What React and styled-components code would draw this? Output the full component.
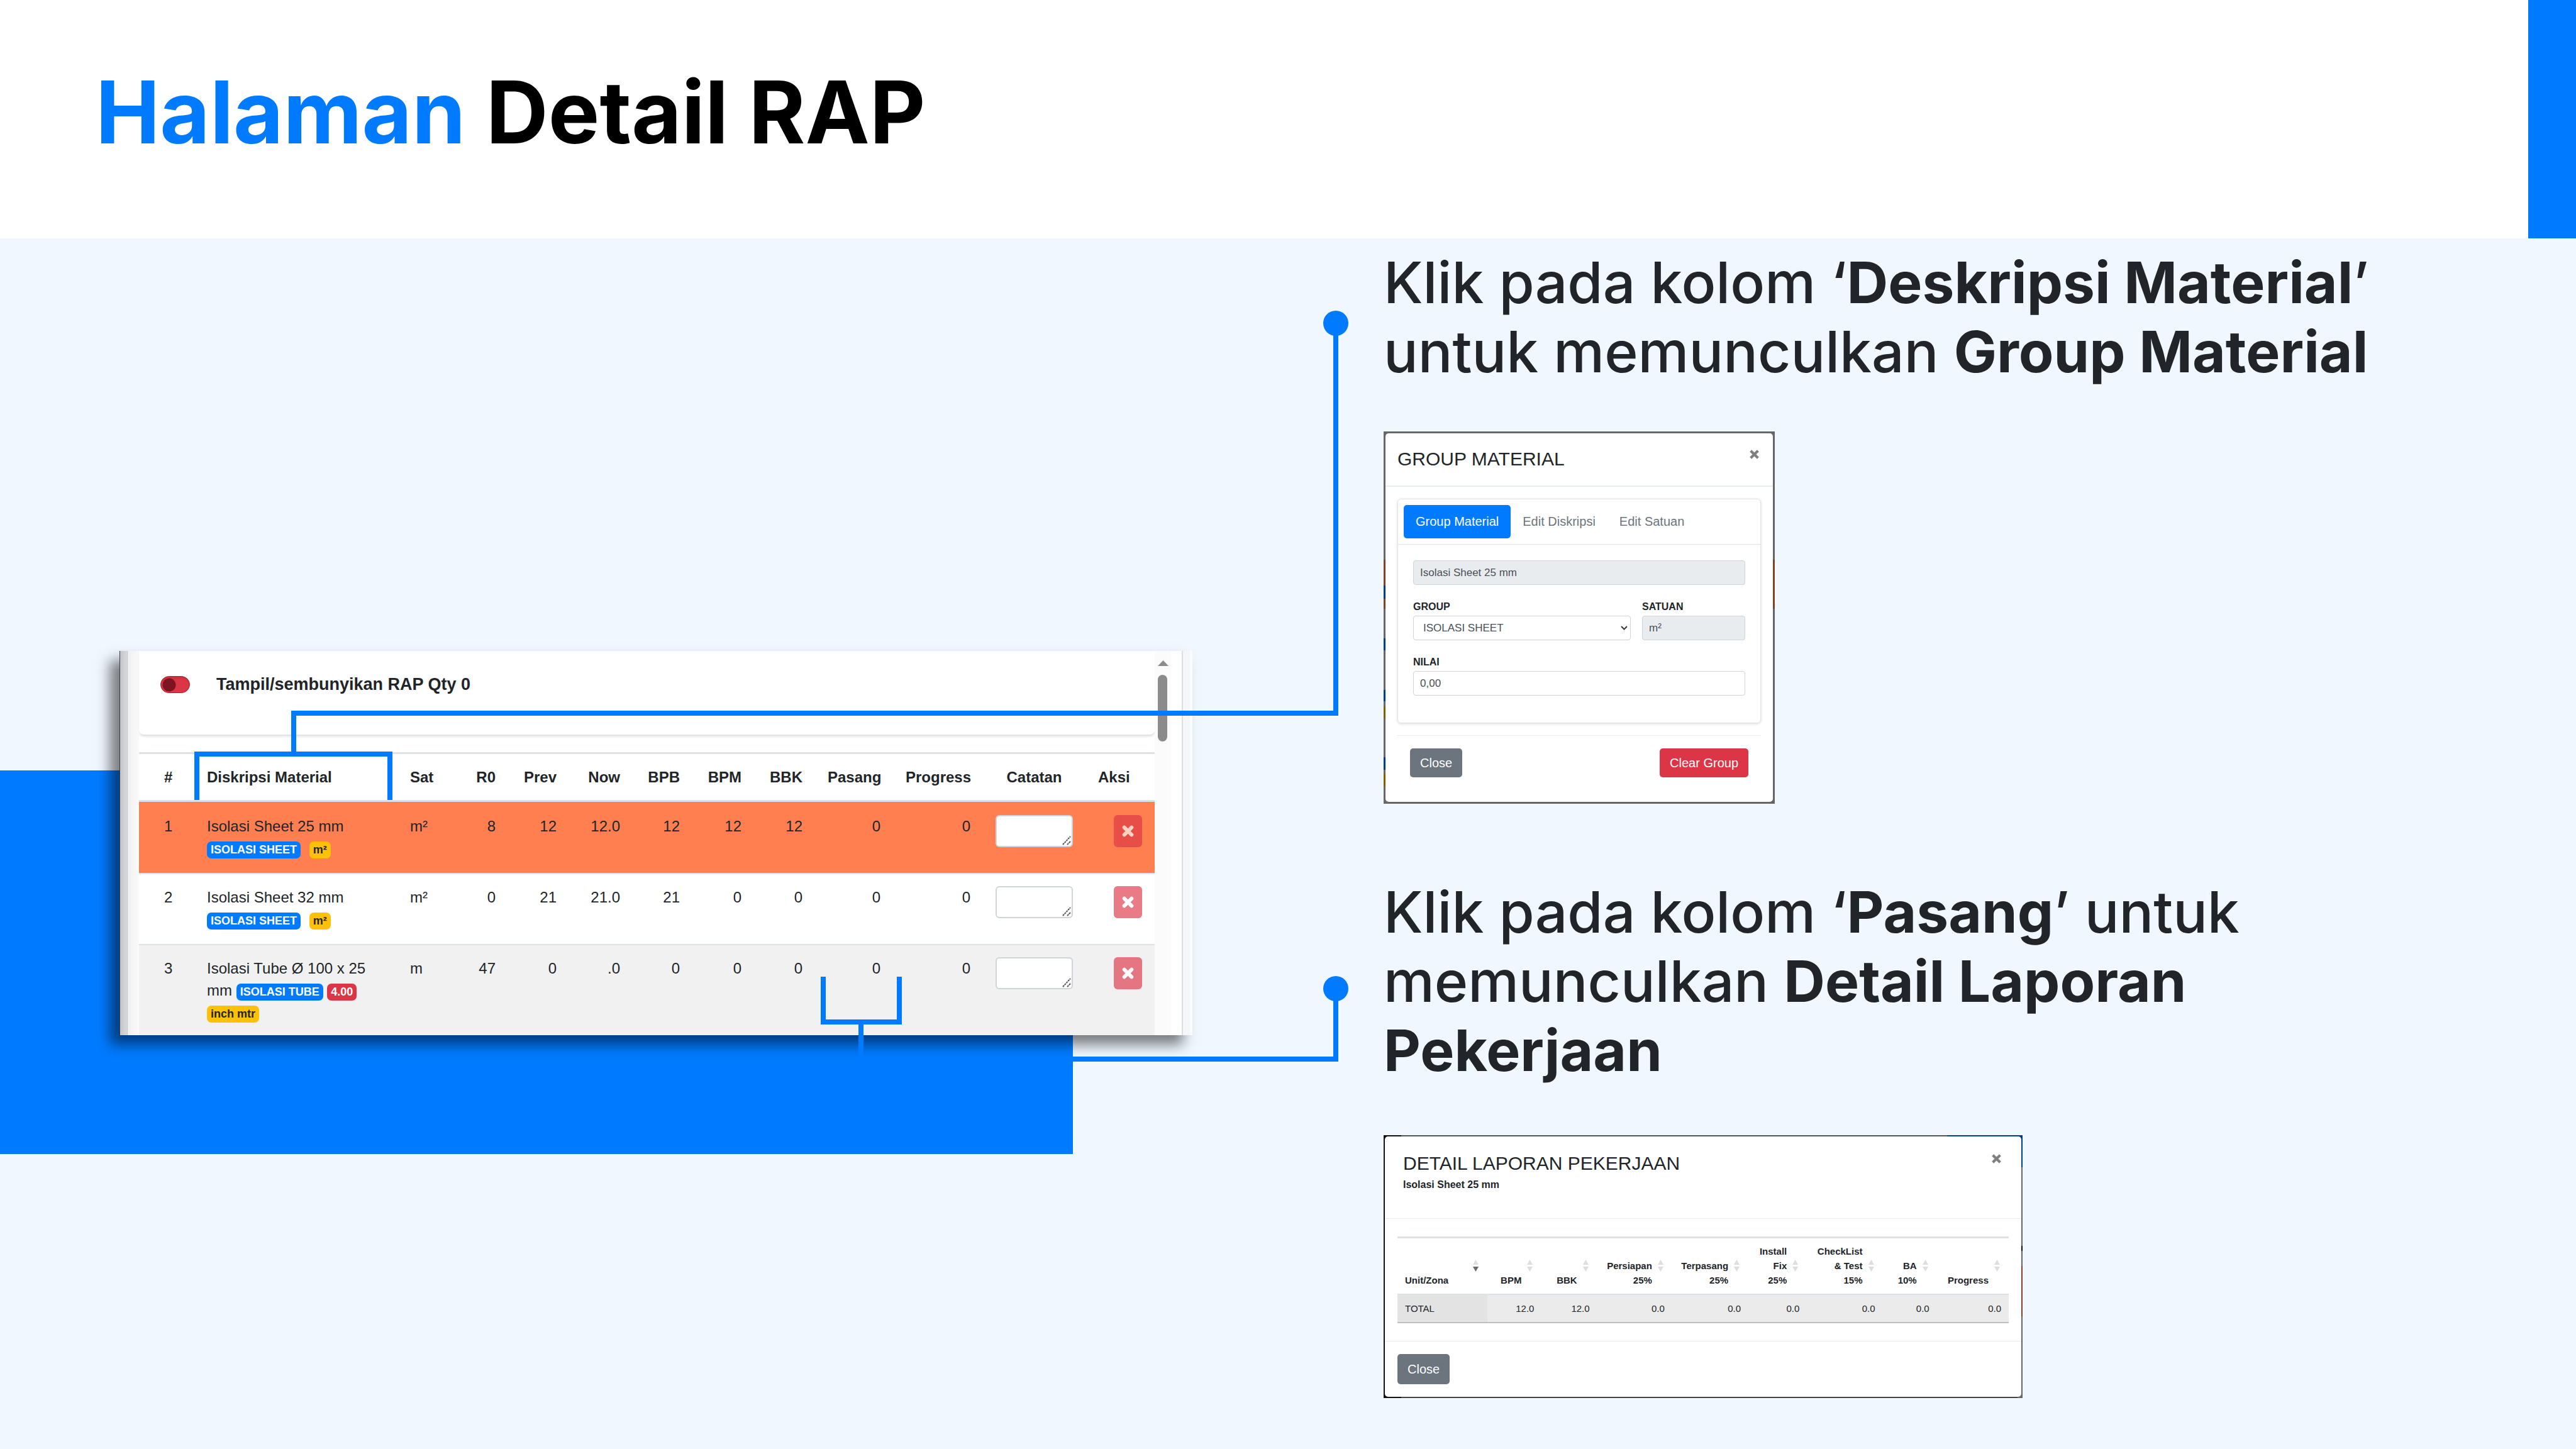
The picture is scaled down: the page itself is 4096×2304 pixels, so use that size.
import React from "react";
import styled, { createGlobalStyle, css } from "styled-components";

const blue = "#007bff";
const ink = "#212529";
const red = "#dc3545";
const amber = "#ffc107";
const line = "#dee2e6";
const sans = '"Liberation Sans", Arial, sans-serif';

const GlobalStyle = createGlobalStyle`
  *, *::before, *::after { box-sizing: border-box; }
  body { margin: 0; background: #f0f7ff; }
  button, input, select, textarea { font: inherit; color: inherit; margin: 0; }
  h1, h2, h3, p { margin: 0; }
`;

const Slide = styled.main`
  min-height: 100vh;
  display: flex;
  flex-direction: column;
  font-family: Inter, sans-serif;
  color: ${ink};
  background: #f0f7ff;
`;

const Header = styled.header`
  display: flex;
  justify-content: space-between;
  height: 379px;
  background: #fff;
`;

const Title = styled.h1`
  padding: 95px 0 0 152px;
  font-size: 137px;
  line-height: 166px;
  font-weight: 700;
  color: #000;
  white-space: nowrap;
`;

const Accent = styled.span`
  color: ${blue};
`;

const HeaderBar = styled.div`
  width: 76px;
  background: ${blue};
`;

const Body = styled.div`
  flex: 1;
  display: grid;
  grid-template-columns: 2200fr 1896fr;
`;

/* Left half: annotated table capture */

const Visual = styled.section`
  position: relative;
  min-width: 0;
  padding: 656px 304px 0 190px;
`;

const Backdrop = styled.div`
  position: absolute;
  left: 0;
  right: 494px;
  top: 846px;
  height: 610px;
  background: ${blue};
`;

const Connectors = styled.svg`
  position: absolute;
  left: 0;
  top: 0;
  overflow: visible;
  fill: ${blue};
`;

const Capture = styled.div`
  position: relative;
  display: grid;
  grid-template-columns: 13px 18px 1fr 43px 17px;
  font-family: ${sans};
  background: #fff;
  box-shadow: -15px 15px 20px rgba(0, 0, 0, 0.5);
`;

const Edge = styled.div`
  border-left: 1px solid #3a3d42;
  border-right: 1px solid #c4c5cc;
  background: linear-gradient(90deg, #c3c5c9, #d8d9de);
`;

const Fade = styled.div`
  background: linear-gradient(90deg, #efefef, #fafafa);
`;

const Outer = styled.div`
  border-left: 2px solid #dcdee3;
  border-right: 4px solid #fafbfd;
  background: #f4f6fa;
`;

const Pane = styled.div`
  min-width: 0;
`;

const FilterCard = styled.label`
  display: flex;
  align-items: center;
  gap: 42px;
  padding: 34px 34px 61px;
  margin-bottom: 26px;
  border-bottom: 2px solid #e3e3e3;
  border-radius: 0 0 8px 8px;
  box-shadow: 0 2px 3px rgba(0, 0, 0, 0.08);
  font-size: 27px;
  line-height: 38px;
  font-weight: 700;
`;

const Toggle = styled.input`
  appearance: none;
  width: 47px;
  height: 27px;
  border: 1px solid #a51f2d;
  border-radius: 14px;
  background: radial-gradient(circle at 13px 13px, #7d1420 10px, transparent 11px), ${red};
  box-shadow: inset 0 3px 3px rgba(0, 0, 0, 0.08);
`;

const RapTable = styled.table`
  width: 100%;
  table-layout: fixed;
  border-collapse: separate;
  border-spacing: 0;
  font-size: 24px;
  line-height: 35px;

  th, td {
    padding: 19px 20px;
    text-align: right;
    vertical-align: top;
    white-space: nowrap;
  }
  th {
    border-top: 3px solid ${line};
    border-bottom: 3px solid ${line};
  }
  td {
    height: 113px;
    border-top: 2px solid ${line};
  }
  th:nth-child(1), td:nth-child(1) { padding-left: 40px; }
  th:nth-child(-n + 3), td:nth-child(-n + 3), th:last-child { text-align: left; }
  td:nth-child(2) { white-space: normal; }
  th:nth-child(12) { text-align: center; }
`;

const RapRow = styled.tr`
  background: ${(p) => (p.$tone === "coral" ? "#ff7f50" : p.$tone === "grey" ? "#f1f1f1" : "#fff")};
  ${(p) => p.$tone === "coral" && css`
    td { border-top-color: #f9804f; }
  `}
`;

const Badge = styled.span`
  display: inline-block;
  padding: 4px 6px;
  border-radius: 7px;
  font-size: 18px;
  line-height: 19px;
  font-weight: 700;
  white-space: nowrap;
  color: ${(p) => (p.$bg === amber ? ink : "#fff")};
  background: ${(p) => p.$bg};
  margin-left: ${(p) => (p.$spaced ? 7 : 0)}px;
`;

const Note = styled.textarea`
  display: block;
  width: 100%;
  height: 51px;
  border: 2px solid #ced4da;
  border-radius: 6px;
  background: #fff;
  resize: none;
`;

const NoteWrap = styled.div`
  position: relative;
`;

const Grip = styled.svg`
  position: absolute;
  right: 2px;
  bottom: 2px;
  stroke: #555;
  stroke-width: 2;
`;

const Remove = styled.button`
  display: grid;
  place-items: center;
  width: 45px;
  height: 51px;
  margin-left: auto;
  padding: 0;
  border: 0;
  border-radius: 6px;
  color: #fff;
  background: ${red};
  opacity: 0.65;
`;

const ScrollTrack = styled.div`
  display: flex;
  flex-direction: column;
  gap: 14px;
  padding: 15px 0 0 5px;
  background: linear-gradient(90deg, #fbfbfb 26px, #fff 26px);
`;

const Thumb = styled.div`
  width: 15px;
  height: 106px;
  border-radius: 8px;
  background: #8b8b8b;
`;

/* Right half: instructions with their dialogs */

const Guide = styled.section`
  min-width: 0;
  padding-top: 15px;
`;

const Step = styled.p`
  max-width: 1650px;
  font-size: 91px;
  line-height: 110px;
  font-weight: 450;

  strong { font-weight: 700; }
`;

const Dialog = styled.section`
  width: ${(p) => (p.$wide ? 1016 : 622)}px;
  margin: ${(p) => (p.$wide ? "80px 0 0" : "72px 0 117px")};
  padding: ${(p) => (p.$wide ? 2 : 3)}px;
  font-family: ${sans};
  background: ${(p) => p.$frame};
`;

const Sheet = styled.div`
  background: #fff;
  border-radius: 5px;
`;

const DialogHead = styled.div`
  display: flex;
  justify-content: space-between;
  align-items: flex-start;
  padding: ${(p) => (p.$wide ? "25px 29px 41px" : "23px 19px 24px")};
  border-bottom: ${(p) => (p.$wide ? 1 : 2)}px solid #e9ecef;
`;

const DialogTitle = styled.h2`
  font-size: 30px;
  line-height: 36px;
  font-weight: 400;
`;

const Subtitle = styled.p`
  margin-top: 4px;
  font-size: 16px;
  line-height: 24px;
  font-weight: 700;
`;

const Dismiss = styled.button`
  padding: 3px 3px 0;
  border: 0;
  background: none;
  color: #7f7f7f;
  line-height: 0;
`;

const DialogBody = styled.div`
  padding: ${(p) => (p.$wide ? "28px 20px" : "19px")};
`;

const Card = styled.div`
  border: 1px solid #e3e3e3;
  border-radius: 6px;
  box-shadow: 0 1px 4px rgba(0, 0, 0, 0.15);
`;

const Tabs = styled.div`
  display: flex;
  padding: 9px;
  border-bottom: 1px solid ${line};
`;

const Tab = styled.button`
  height: 53px;
  padding: 0 19px;
  border: 0;
  border-radius: 5px;
  font-size: 20px;
  color: ${(p) => (p.$active ? "#fff" : "#6c757d")};
  background: ${(p) => (p.$active ? blue : "transparent")};
`;

const Form = styled.form`
  display: grid;
  grid-template-columns: 1fr 164px;
  gap: 23px 18px;
  padding: 25px 24px 43px;
`;

const Field = styled.div`
  display: flex;
  flex-direction: column;
  gap: 2px;
  grid-column: ${(p) => (p.$full ? "1 / -1" : "auto")};
`;

const FieldLabel = styled.label`
  font-size: 16px;
  line-height: 24px;
  font-weight: 700;
`;

const control = css`
  width: 100%;
  height: 39px;
  border: 1px solid #ced4da;
  border-radius: 4px;
  font-size: 17px;
  color: #495057;
  background: #fff;
`;

const TextInput = styled.input`
  ${control}
  padding: 0 10px;
  &:read-only { background: #e9ecef; }
`;

const SelectWrap = styled.div`
  display: grid;
  align-items: center;
  > * { grid-area: 1 / 1; }
  > svg { justify-self: end; margin-right: 5px; pointer-events: none; }
`;

const Select = styled.select`
  ${control}
  appearance: none;
  padding: 0 15px;
`;

const Actions = styled.div`
  display: flex;
  justify-content: space-between;
  padding: ${(p) => (p.$wide ? "20px" : "20px 20px 39px")};
  margin: ${(p) => (p.$wide ? "0" : "0 19px")};
  border-top: 1px solid #e9ecef;
`;

const Button = styled.button`
  height: ${(p) => (p.$tall ? 48 : 46)}px;
  padding: 0 16px;
  border: 0;
  border-radius: 5px;
  font-size: 20px;
  color: #fff;
  background: ${(p) => (p.$danger ? red : "#6c757d")};
`;

const ReportTable = styled.table`
  width: 100%;
  table-layout: fixed;
  border-collapse: separate;
  border-spacing: 0;
  font-size: 15px;
  line-height: 23px;
  text-align: right;

  th {
    position: relative;
    padding: 9px 32px 10px 8px;
    border-top: 3px solid ${line};
    border-bottom: 2px solid ${line};
    vertical-align: bottom;
    white-space: pre;
  }
  td {
    padding: 10px 12px;
    border-bottom: 2px solid #bfbfbf;
    background: #ebebeb;
  }
  th:first-child, td:first-child { text-align: left; padding-left: 12px; }
  td:first-child { background: #e3e3e3; }
`;

const SortIcon = styled.svg`
  position: absolute;
  right: 14px;
  bottom: 35px;
  fill: #dedede;
`;

const Cross = ({ size, stroke, round }) => (
  <svg width={size} height={size} viewBox="0 0 18 18" aria-hidden="true">
    <path
      d={round ? "M4 4L14 14M14 4L4 14" : "M2 2L16 16M16 2L2 16"}
      stroke="currentColor"
      strokeWidth={stroke}
      strokeLinecap={round ? "round" : "butt"}
      fill="none"
    />
  </svg>
);

const rapColumns = [
  ["#", 88], ["Diskripsi Material", 323], ["Sat", 98], ["R0", 78], ["Prev", 97], ["Now", 101],
  ["BPB", 95], ["BPM", 98], ["BBK", 97], ["Pasang", 124], ["Progress", 143], ["Catatan", 163], ["Aksi", 110],
];

const rapRows = [
  {
    tone: "coral", name: "Isolasi Sheet 25 mm", unit: "m²",
    badges: [["ISOLASI SHEET", blue], ["m²", amber, true]],
    values: ["8", "12", "12.0", "12", "12", "12", "0", "0"],
  },
  {
    tone: "white", name: "Isolasi Sheet 32 mm", unit: "m²",
    badges: [["ISOLASI SHEET", blue], ["m²", amber, true]],
    values: ["0", "21", "21.0", "21", "0", "0", "0", "0"],
  },
  {
    tone: "grey", name: "Isolasi Tube Ø 100 x 25 mm", unit: "m",
    badges: [["ISOLASI TUBE", blue], ["4.00", red], ["inch mtr", amber]],
    values: ["47", "0", ".0", "0", "0", "0", "0", "0"],
  },
];

const reportColumns = [
  ["Unit/Zona", 143, "TOTAL"], ["BPM", 86, "12.0"], ["BBK", 88, "12.0"], ["Persiapan\n25%", 119, "0.0"],
  ["Terpasang\n25%", 121, "0.0"], ["Install\nFix\n25%", 93, "0.0"], ["CheckList\n& Test\n15%", 120, "0.0"],
  ["BA\n10%", 86, "0.0"], ["Progress", 114, "0.0"],
];

/* Slivers of the dimmed page that show round each dialog */
const groupFrame = `
  linear-gradient(#666 204px, #80402a 204px 245px, #003f80 245px 266px, #80402a 266px 282px,
    #666 282px 329px, #003f80 329px 348px, #666 348px 411px, #003f80 411px 429px, #666 429px 437px,
    #806004 437px 456px, #666 456px 518px, #003f80 518px 538px, #666 538px 544px, #806004 544px 564px,
    #666 564px) left / 8px 100% no-repeat,
  linear-gradient(#666 204px, #80402a 204px 282px, #666 282px)`;
const reportFrame = `
  linear-gradient(#003f80 51px, #666 51px 176px, #111 176px 184px, #666 184px 208px, #80402a 208px 288px,
    #666 288px) right / 8px 100% no-repeat,
  linear-gradient(90deg, #111 28px, #555 28px 896px, #003f80 896px) top / 100% 8px no-repeat,
  linear-gradient(90deg, #111 28px, #444 28px)`;

function RapCapture() {
  return (
    <Capture>
      <Edge />
      <Fade />
      <Pane>
        <FilterCard>
          <Toggle type="checkbox" />
          Tampil/sembunyikan RAP Qty 0
        </FilterCard>
        <RapTable>
          <colgroup>
            {rapColumns.map(([name, width]) => <col key={name} width={width} />)}
          </colgroup>
          <thead>
            <tr>{rapColumns.map(([name]) => <th key={name}>{name}</th>)}</tr>
          </thead>
          <tbody>
            {rapRows.map((row, i) => (
              <RapRow key={row.name} $tone={row.tone}>
                <td>{i + 1}</td>
                <td>
                  {row.name}
                  {row.badges.map(([text, bg, spaced]) => (
                    <React.Fragment key={text}>
                      {" "}
                      <Badge $bg={bg} $spaced={spaced}>{text}</Badge>
                    </React.Fragment>
                  ))}
                </td>
                <td>{row.unit}</td>
                {row.values.map((value, n) => <td key={n}>{value}</td>)}
                <td>
                  <NoteWrap>
                    <Note aria-label={`Catatan ${row.name}`} />
                    <Grip width="15" height="17" viewBox="0 0 15 17" aria-hidden="true">
                      <path d="M1 15L13 2M8 15L13 10" strokeDasharray="3 1" />
                    </Grip>
                  </NoteWrap>
                </td>
                <td>
                  <Remove type="button" aria-label={`Hapus ${row.name}`}>
                    <Cross size={21} stroke={5} round />
                  </Remove>
                </td>
              </RapRow>
            ))}
          </tbody>
        </RapTable>
      </Pane>
      <ScrollTrack>
        <svg width="17" height="9" viewBox="0 0 17 9" fill="#8b8b8b" aria-hidden="true">
          <path d="M0 9L8.500 0L17 9Z" />
        </svg>
        <Thumb />
      </ScrollTrack>
      <Outer />
    </Capture>
  );
}

function GroupDialog() {
  return (
    <Dialog $frame={groupFrame}>
      <Sheet>
        <DialogHead>
          <DialogTitle>GROUP MATERIAL</DialogTitle>
          <Dismiss type="button" aria-label="Close"><Cross size={15} stroke={5} /></Dismiss>
        </DialogHead>
        <DialogBody>
          <Card>
            <Tabs>
              <Tab type="button" $active>Group Material</Tab>
              <Tab type="button">Edit Diskripsi</Tab>
              <Tab type="button">Edit Satuan</Tab>
            </Tabs>
            <Form>
              <Field $full>
                <TextInput aria-label="Material" readOnly value="Isolasi Sheet 25 mm" />
              </Field>
              <Field>
                <FieldLabel htmlFor="group">GROUP</FieldLabel>
                <SelectWrap>
                  <Select id="group"><option>ISOLASI SHEET</option></Select>
                  <svg width="11" height="7" viewBox="0 0 11 7" fill="none" stroke="#343a40" strokeWidth="2" aria-hidden="true">
                    <path d="M1 1L5.500 5.500L10 1" />
                  </svg>
                </SelectWrap>
              </Field>
              <Field>
                <FieldLabel htmlFor="satuan">SATUAN</FieldLabel>
                <TextInput id="satuan" readOnly value="m²" />
              </Field>
              <Field $full>
                <FieldLabel htmlFor="nilai">NILAI</FieldLabel>
                <TextInput id="nilai" defaultValue="0,00" />
              </Field>
            </Form>
          </Card>
        </DialogBody>
        <Actions>
          <Button type="button">Close</Button>
          <Button type="button" $danger>Clear Group</Button>
        </Actions>
      </Sheet>
    </Dialog>
  );
}

function ReportDialog() {
  return (
    <Dialog $wide $frame={reportFrame}>
      <Sheet>
        <DialogHead $wide>
          <div>
            <DialogTitle>DETAIL LAPORAN PEKERJAAN</DialogTitle>
            <Subtitle>Isolasi Sheet 25 mm</Subtitle>
          </div>
          <Dismiss type="button" aria-label="Close"><Cross size={15} stroke={5} /></Dismiss>
        </DialogHead>
        <DialogBody $wide>
          <ReportTable>
            <colgroup>
              {reportColumns.map(([name, width]) => <col key={name} width={width} />)}
            </colgroup>
            <thead>
              <tr>
                {reportColumns.map(([name], i) => (
                  <th key={name}>
                    {name}
                    <SortIcon width="9" height="19" viewBox="0 0 9 19" aria-hidden="true">
                      <path d="M0 8L4.500 0L9 8Z" />
                      <path d="M0 11L4.500 19L9 11Z" fill={i === 0 ? "#6b6b6b" : undefined} />
                    </SortIcon>
                  </th>
                ))}
              </tr>
            </thead>
            <tbody>
              <tr>{reportColumns.map(([name, , value]) => <td key={name}>{value}</td>)}</tr>
            </tbody>
          </ReportTable>
        </DialogBody>
        <Actions $wide>
          <Button type="button" $tall>Close</Button>
        </Actions>
      </Sheet>
    </Dialog>
  );
}

export default function App() {
  return (
    <>
      <GlobalStyle />
      <Slide>
        <Header>
          <Title><Accent>Halaman</Accent> Detail RAP</Title>
          <HeaderBar />
        </Header>
        <Body>
          <Visual>
            <Backdrop />
            <RapCapture />
            <Connectors width="2200" height="1400" viewBox="0 0 2200 1400" aria-hidden="true">
              <circle cx="2124" cy="135" r="20" />
              <path d="M2120 135H2128V759H471V816H624V893H616V824H317V893H309V816H463V751H2120Z" />
              <path d="M1305 1174H1313V1242H1426V1174H1434V1250H1373V1301H2120V1193H2128V1309H1365V1250H1305Z" />
              <circle cx="2124" cy="1193" r="20" />
            </Connectors>
          </Visual>
          <Guide>
            <Step>
              Klik pada kolom ‘<strong>Deskripsi Material</strong>’ untuk memunculkan <strong>Group Material</strong>
            </Step>
            <GroupDialog />
            <Step>
              Klik pada kolom ‘<strong>Pasang</strong>’ untuk memunculkan <strong>Detail Laporan Pekerjaan</strong>
            </Step>
            <ReportDialog />
          </Guide>
        </Body>
      </Slide>
    </>
  );
}
